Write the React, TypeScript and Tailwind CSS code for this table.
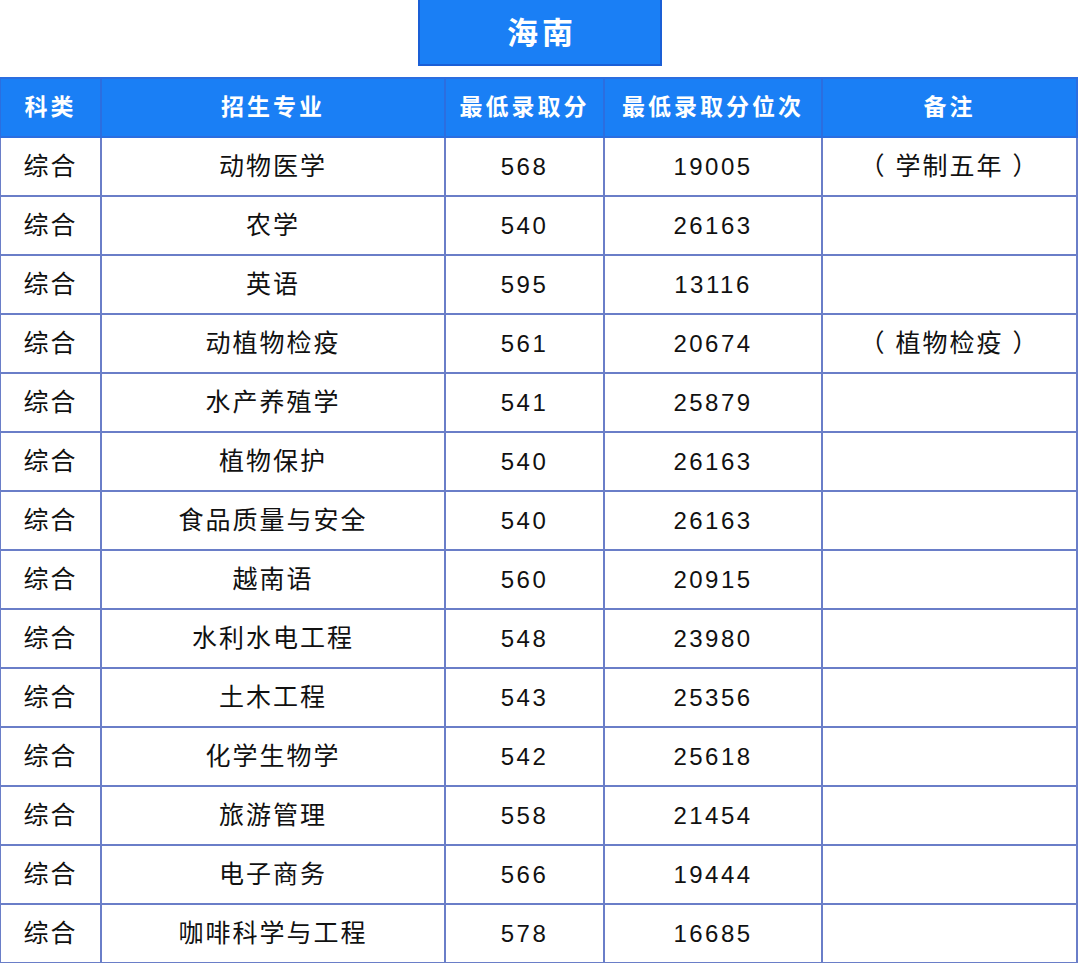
import React from "react"

const rows: [string, string, string, string, string][] = [
  ["综合", "动物医学", "568", "19005", "（ 学制五年 ）"],
  ["综合", "农学", "540", "26163", ""],
  ["综合", "英语", "595", "13116", ""],
  ["综合", "动植物检疫", "561", "20674", "（ 植物检疫 ）"],
  ["综合", "水产养殖学", "541", "25879", ""],
  ["综合", "植物保护", "540", "26163", ""],
  ["综合", "食品质量与安全", "540", "26163", ""],
  ["综合", "越南语", "560", "20915", ""],
  ["综合", "水利水电工程", "548", "23980", ""],
  ["综合", "土木工程", "543", "25356", ""],
  ["综合", "化学生物学", "542", "25618", ""],
  ["综合", "旅游管理", "558", "21454", ""],
  ["综合", "电子商务", "566", "19444", ""],
  ["综合", "咖啡科学与工程", "578", "16685", ""],
]

const cols = ["w-[101px]", "w-[344px]", "w-[159px]", "w-[218px]", "w-[255px]"]
const headers = ["科类", "招生专业", "最低录取分", "最低录取分位次", "备注"]

export default function App() {
  return (
    <div
      className="w-[1080px] h-[963px] bg-white overflow-hidden"
      style={{ fontFamily: '"Liberation Sans", "Noto Sans CJK SC", sans-serif' }}
    >
      {/* Title */}
      <div className="flex justify-center">
        <div className="w-[244px] h-[66px] bg-[#1a7ff5] border-2 border-[#1a5fd6] border-t-0 flex items-center justify-center pt-[5px]">
          <span className="text-white text-[31px] font-bold tracking-[4px] pl-[4px]">海南</span>
        </div>
      </div>

      {/* Table */}
      <table className="mt-[11px] -ml-[1px] border-collapse table-fixed w-[1079px]">
        <thead>
          <tr className="h-[59px] bg-[#1a7ff5]">
            {headers.map((h, i) => (
              <th
                key={h}
                className={`${cols[i]} border-2 border-[#2b6ee0] text-white text-[23px] font-bold tracking-[3px] text-center p-0`}
              >
                {h}
              </th>
            ))}
          </tr>
        </thead>
        <tbody>
          {rows.map((r, ri) => (
            <tr key={ri} className="h-[59px]">
              {r.map((c, ci) => (
                <td
                  key={ci}
                  className="border-2 border-[#6a7ec8] text-[#111] text-[24px] tracking-[2.5px] text-center p-0 whitespace-nowrap"
                >
                  {ci === 2 || ci === 3 ? c : <span className="text-[25px] tracking-[2px]">{c}</span>}
                </td>
              ))}
            </tr>
          ))}
        </tbody>
      </table>
    </div>
  )
}
